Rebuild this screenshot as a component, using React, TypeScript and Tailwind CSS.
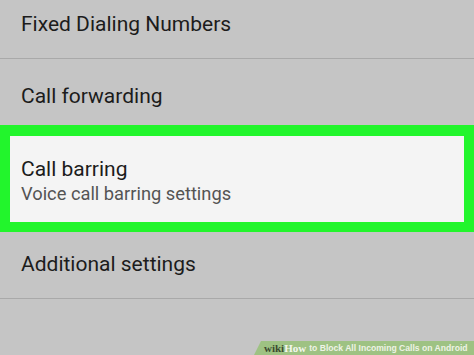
export default function App() {
  return (
    <div
      className="relative h-[355px] w-[474px] overflow-hidden bg-[#c5c5c5] text-[#1c1c1c]"
      style={{ fontFamily: "Roboto, 'Noto Sans', sans-serif" }}
    >
      {/* Fixed Dialing Numbers */}
      <div className="flex h-[59px] items-start border-b border-[#a9a9a9] pl-[21px] pt-[9px]">
        <span className="text-[21px] leading-[30px]">Fixed Dialing Numbers</span>
      </div>

      {/* Call forwarding */}
      <div className="flex h-[66px] items-start pl-[21px] pt-[22px]">
        <span className="text-[21px] leading-[30px]">Call forwarding</span>
      </div>

      {/* Call barring (highlighted) */}
      <div className="h-[107px] border-[10px] border-t-[11px] border-[#22f52c] bg-[#f4f4f4]">
        <div className="flex flex-col pl-[11px] pt-[18px]">
          <span className="text-[21px] leading-[30px]">Call barring</span>
          <span className="mt-[-3px] text-[18.3px] leading-[26px] text-[#545454]">
            Voice call barring settings
          </span>
        </div>
      </div>

      {/* Additional settings */}
      <div className="flex h-[67px] items-start border-b border-[#a9a9a9] pl-[21px] pt-[17px]">
        <span className="text-[21px] leading-[30px]">Additional settings</span>
      </div>

      {/* wikiHow watermark */}
      <div className="absolute bottom-0 right-0 flex h-[14px] w-[220px] items-center bg-[#9ec283] pl-[10px] [clip-path:polygon(7px_0,100%_0,100%_100%,0_100%)]">
        <span
          className="text-[11px] font-bold leading-none text-[#3c4a30]"
          style={{ fontFamily: "'Liberation Serif', serif" }}
        >
          wiki
        </span>
        <span
          className="text-[11px] font-bold leading-none text-[#f4f7ee]"
          style={{ fontFamily: "'Liberation Serif', serif" }}
        >
          How
        </span>
        <span
          className="ml-[3px] whitespace-nowrap text-[8.6px] font-bold leading-none text-[#eef3e6]"
          style={{ fontFamily: "'Liberation Sans', sans-serif" }}
        >
          to Block All Incoming Calls on Android
        </span>
      </div>
    </div>
  )
}
